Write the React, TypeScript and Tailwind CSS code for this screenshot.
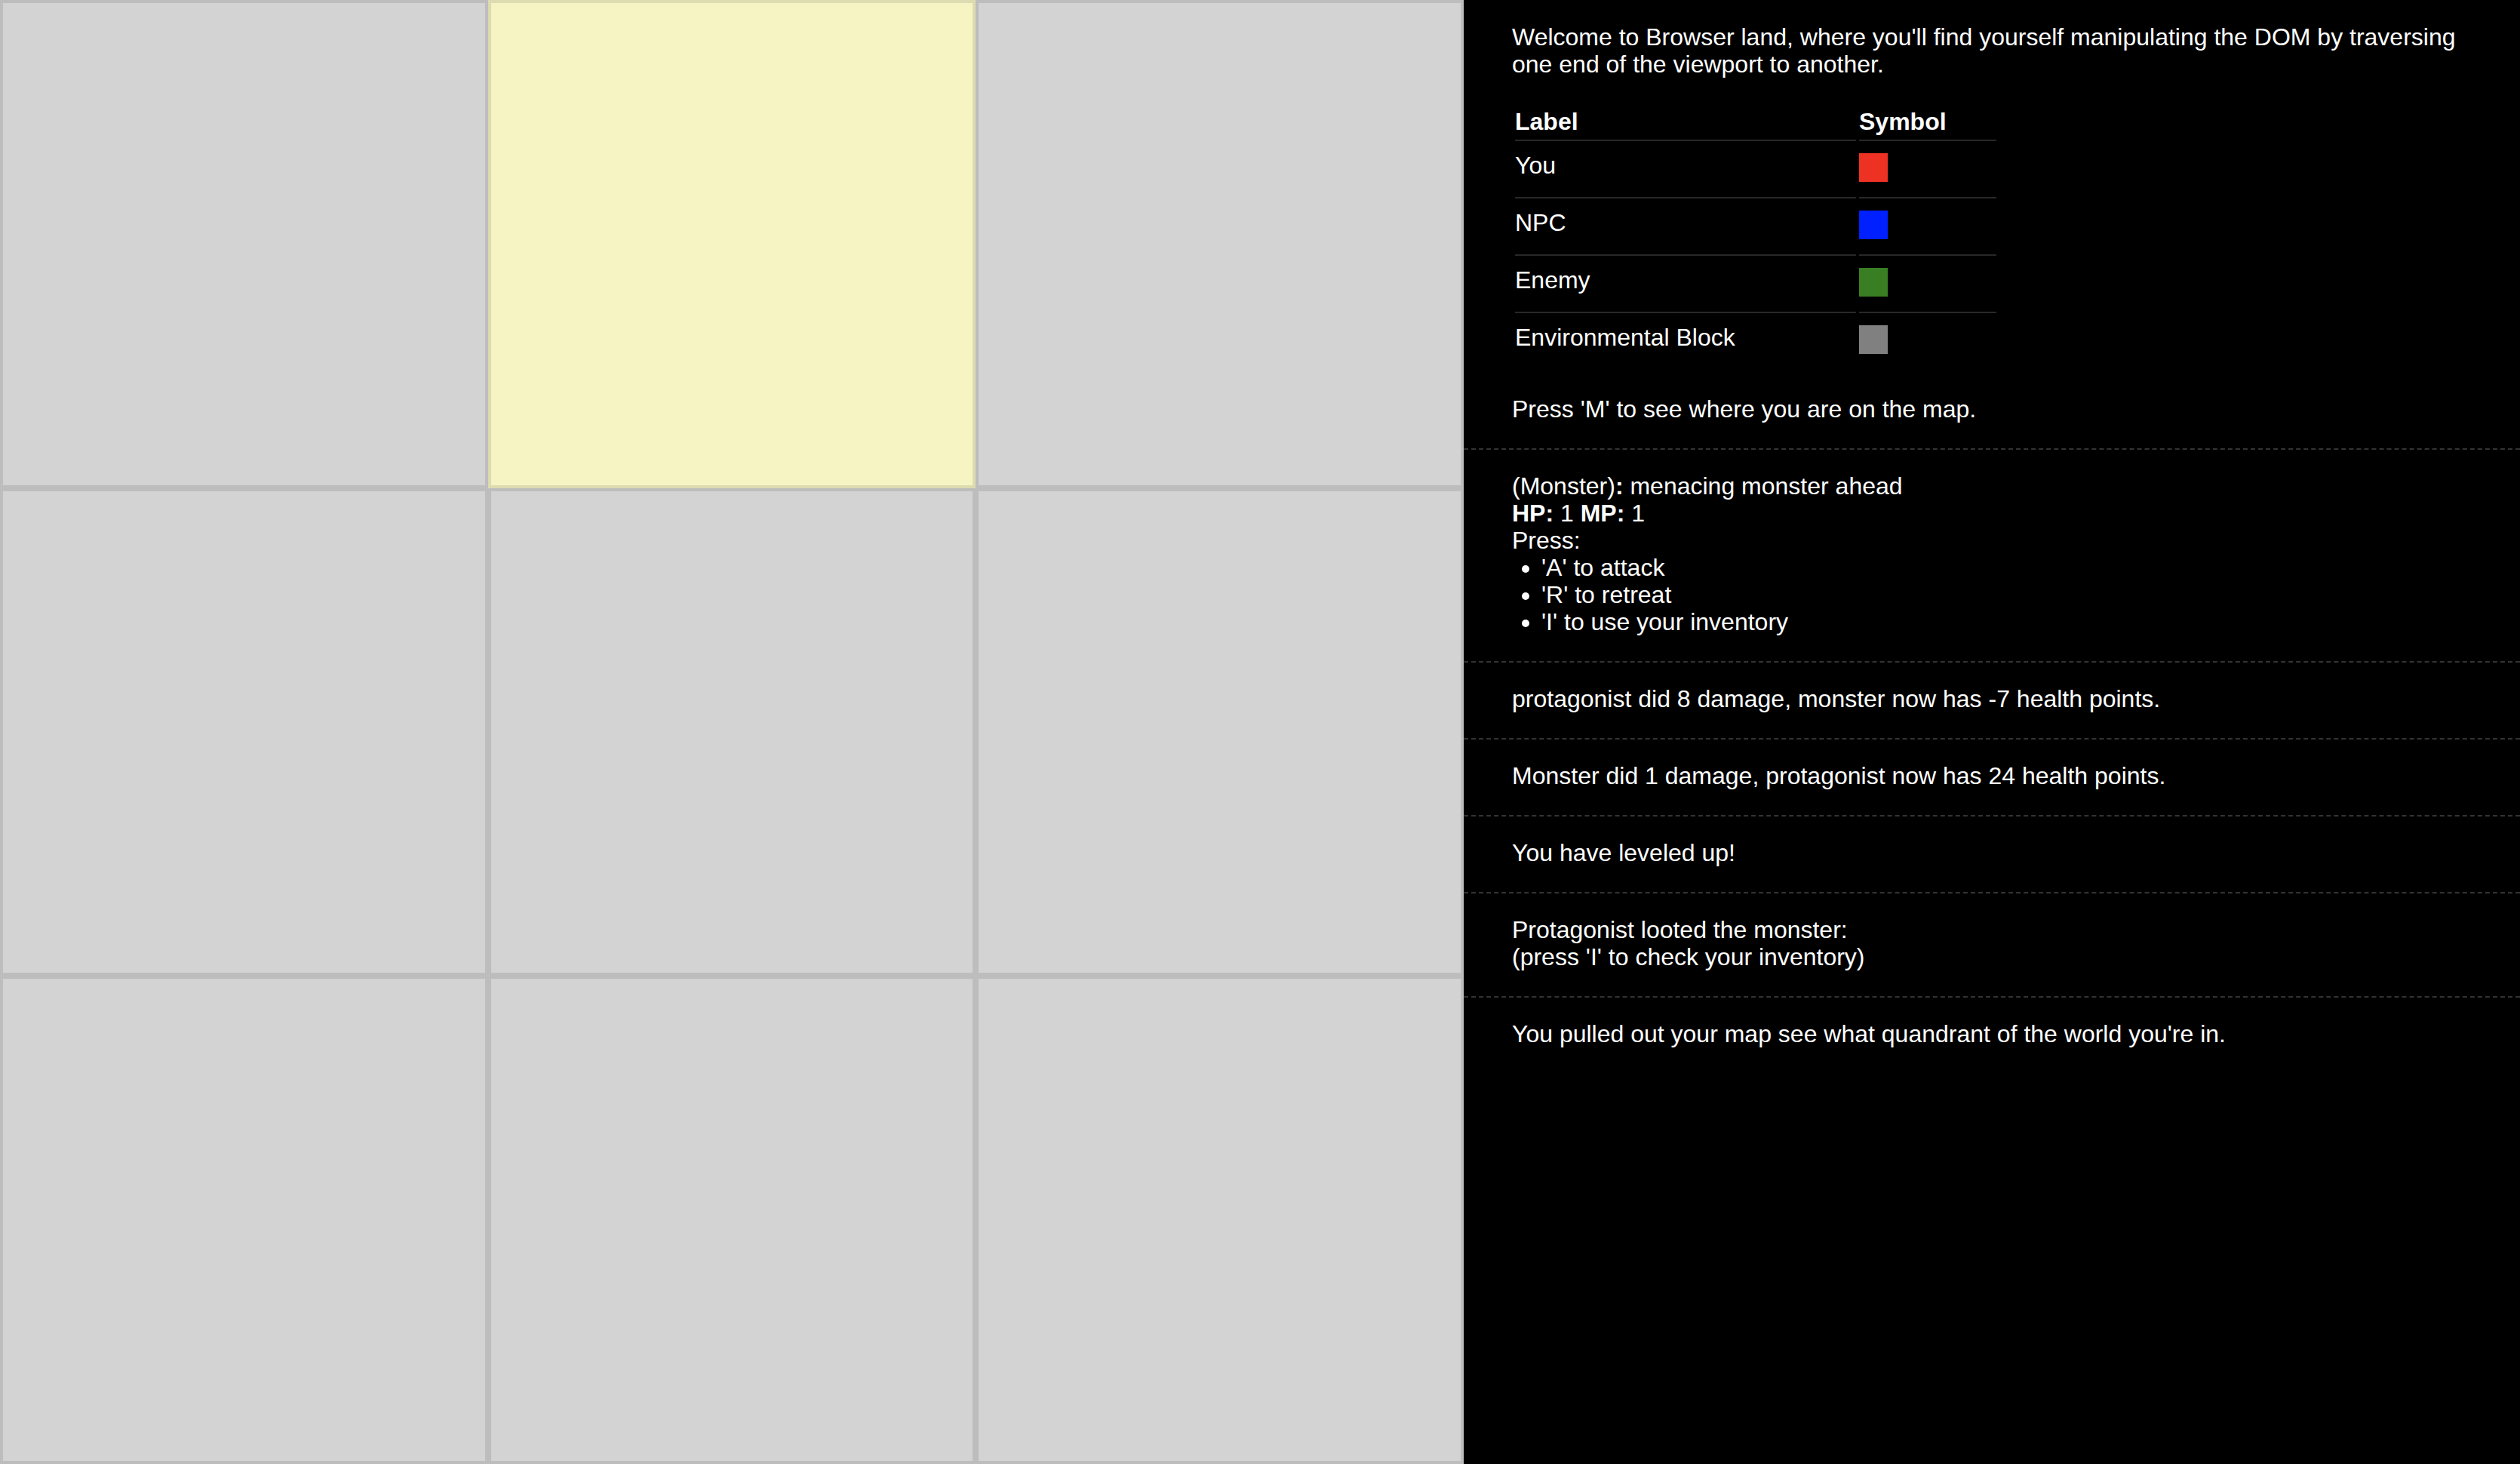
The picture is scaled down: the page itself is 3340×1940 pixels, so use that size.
import type { FC } from "react";

const cells = [false, true, false, false, false, false, false, false, false];

const legend = [
  { label: "You", color: "bg-[#ed3224]" },
  { label: "NPC", color: "bg-[#0020ff]" },
  { label: "Enemy", color: "bg-[#3a7e23]" },
  { label: "Environmental Block", color: "bg-[#808080]" },
];

const App: FC = () => {
  return (
    <div className="flex w-[3340px] h-[1940px] bg-black font-['Liberation_Sans',Arial,sans-serif] text-[32px] leading-[36px] text-white">
      {/* Map grid */}
      <div className="grid grid-cols-3 grid-rows-3 w-[1940px] h-[1940px] shrink-0">
        {cells.map((active, i) => (
          <div
            key={i}
            className={`border-4 border-black/10 ${active ? "bg-[#f7f4c4]" : "bg-[#d3d3d3]"}`}
          />
        ))}
      </div>

      {/* Log panel */}
      <div className="flex-1 h-[1940px]">
        <div className="px-[64px] pt-[31px] pb-[34px]">
          <p className="mb-[32px]">
            Welcome to Browser land, where you'll find yourself manipulating the DOM by traversing one end of the viewport to another.
          </p>

          <table className="border-separate border-spacing-[4px] w-[646px]">
            <thead>
              <tr>
                <th className="w-[452px] text-left font-bold pt-[4px] pb-[6px] border-b-2 border-[#282828]">Label</th>
                <th className="text-left font-bold pt-[4px] pb-[6px] border-b-2 border-[#282828]">Symbol</th>
              </tr>
            </thead>
            <tbody>
              {legend.map((row, i) => (
                <tr key={row.label}>
                  <td
                    className={`align-top pt-[10px] pb-[24px] ${i < legend.length - 1 ? "border-b-2 border-[#282828]" : ""}`}
                  >
                    {row.label}
                  </td>
                  <td
                    className={`align-top pt-[12px] pb-[20px] ${i < legend.length - 1 ? "border-b-2 border-[#282828]" : ""}`}
                  >
                    <div className={`w-[38px] h-[38px] ${row.color}`} />
                  </td>
                </tr>
              ))}
            </tbody>
          </table>

          <p className="mt-[31px]">Press 'M' to see where you are on the map.</p>
        </div>

        <div className="border-t-2 border-dashed border-[#333] px-[64px] pt-[30px] pb-[34px]">
          <div>
            (Monster)<b>:</b> menacing monster ahead
          </div>
          <div>
            <b>HP:</b> 1 <b>MP:</b> 1
          </div>
          <div>Press:</div>
          <ul className="list-disc pl-[39px]">
            <li>'A' to attack</li>
            <li>'R' to retreat</li>
            <li>'I' to use your inventory</li>
          </ul>
        </div>

        <div className="border-t-2 border-dashed border-[#333] px-[64px] pt-[30px] pb-[34px]">
          protagonist did 8 damage, monster now has -7 health points.
        </div>

        <div className="border-t-2 border-dashed border-[#333] px-[64px] pt-[30px] pb-[34px]">
          Monster did 1 damage, protagonist now has 24 health points.
        </div>

        <div className="border-t-2 border-dashed border-[#333] px-[64px] pt-[30px] pb-[34px]">
          You have leveled up!
        </div>

        <div className="border-t-2 border-dashed border-[#333] px-[64px] pt-[30px] pb-[34px]">
          <div>Protagonist looted the monster:</div>
          <div>(press 'I' to check your inventory)</div>
        </div>

        <div className="border-t-2 border-dashed border-[#333] px-[64px] pt-[30px] pb-[34px]">
          You pulled out your map see what quandrant of the world you're in.
        </div>
      </div>
    </div>
  );
};

export default App;
